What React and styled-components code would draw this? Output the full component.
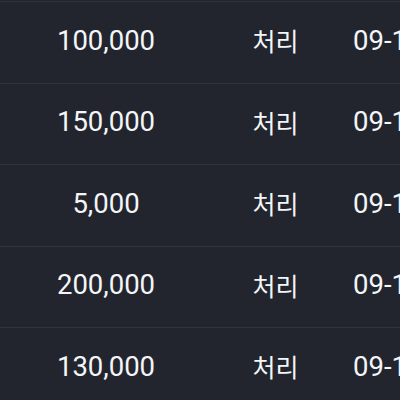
import styled, { createGlobalStyle } from 'styled-components';

const GlobalStyle = createGlobalStyle`
  html, body {
    margin: 0;
    padding: 0;
    background: #22252e;
    overflow: hidden;
  }
`;

const Table = styled.div`
  width: 400px;
  height: 400px;
  overflow: hidden;
  background: #22252e;
  font-family: Roboto, "Noto Sans CJK KR", sans-serif;
  color: #f4f5f7;
  border-top: 1px solid #2f323b;
  margin-top: 1px;
`;

const Row = styled.div`
  display: grid;
  grid-template-columns: 212px 127px 1fr;
  height: 81.5px;
  border-bottom: 1px solid #31343d;
  align-items: center;
  padding-bottom: 4px;
  box-sizing: border-box;
`;

const Cell = styled.div`
  display: flex;
  justify-content: ${(p) => (p.$left ? 'flex-start' : 'center')};
  padding-left: ${(p) => (p.$left ? '14px' : '0')};
  font-size: ${(p) => (p.$kr ? '25px' : '27.5px')};
  white-space: nowrap;
  overflow: hidden;
`;

const rows = [
  { amount: '100,000', date: '09-14 15:32' },
  { amount: '150,000', date: '09-14 15:20' },
  { amount: '5,000', date: '09-14 14:58' },
  { amount: '200,000', date: '09-14 14:41' },
  { amount: '130,000', date: '09-14 14:12' },
];

export default function App() {
  return (
    <>
      <GlobalStyle />
      <Table>
        {rows.map((r) => (
          <Row key={r.amount}>
            <Cell>{r.amount}</Cell>
            <Cell $kr>처리</Cell>
            <Cell $left>{r.date}</Cell>
          </Row>
        ))}
      </Table>
    </>
  );
}
